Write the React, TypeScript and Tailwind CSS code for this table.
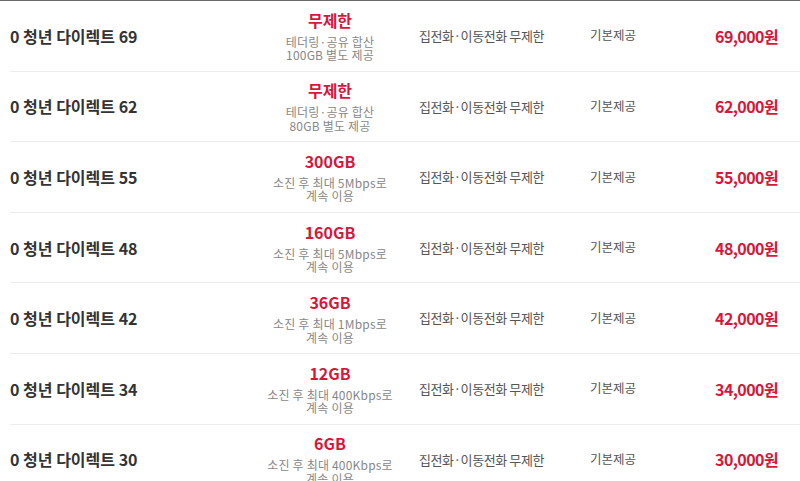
const PLANS = [
  { name: '0 청년 다이렉트 69', data: '무제한', note: ['테더링·공유 합산', '100GB 별도 제공'], price: '69,000원' },
  { name: '0 청년 다이렉트 62', data: '무제한', note: ['테더링·공유 합산', '80GB 별도 제공'], price: '62,000원' },
  { name: '0 청년 다이렉트 55', data: '300GB', note: ['소진 후 최대 5Mbps로', '계속 이용'], price: '55,000원' },
  { name: '0 청년 다이렉트 48', data: '160GB', note: ['소진 후 최대 5Mbps로', '계속 이용'], price: '48,000원' },
  { name: '0 청년 다이렉트 42', data: '36GB', note: ['소진 후 최대 1Mbps로', '계속 이용'], price: '42,000원' },
  { name: '0 청년 다이렉트 34', data: '12GB', note: ['소진 후 최대 400Kbps로', '계속 이용'], price: '34,000원' },
  { name: '0 청년 다이렉트 30', data: '6GB', note: ['소진 후 최대 400Kbps로', '계속 이용'], price: '30,000원' },
]

export default function App() {
  return (
    <div
      className="w-[800px] h-[481px] overflow-hidden bg-white border-t border-[#6b6b6b]"
      style={{ fontFamily: '"Noto Sans CJK KR", "Noto Sans", sans-serif' }}
    >
      {PLANS.map((plan) => (
        <div key={plan.name} className="ml-[10px] h-[70.6px] shrink-0 flex items-center border-b border-[#ececec]">
          <div className="w-[250px] text-[16px] font-bold text-[#333]">{plan.name}</div>
          <div className="w-[140px] flex flex-col items-center">
            <div className="text-[16px] leading-[20px] font-bold text-[#d6173a]">{plan.data}</div>
            <div className="mt-[5px] text-[12px] leading-[13.5px] tracking-[0.2px] text-[#888] text-center whitespace-nowrap">
              {plan.note[0]}
              <br />
              {plan.note[1]}
            </div>
          </div>
          <div className="w-[170px] pl-[19px] text-[13px] tracking-[-0.4px] text-[#555]">집전화·이동전화 무제한</div>
          <div className="w-[120px] pl-[20px] text-[12.5px] text-[#555]">기본제공</div>
          <div className="flex-1 pr-[22px] text-right text-[16px] tracking-[-0.6px] font-bold text-[#d6173a]">{plan.price}</div>
        </div>
      ))}
    </div>
  )
}
